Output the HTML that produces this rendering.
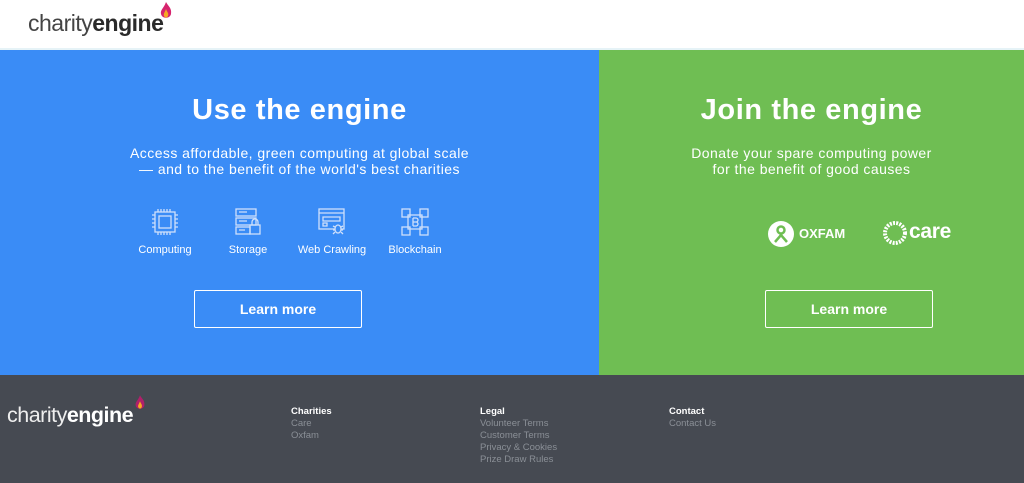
<!DOCTYPE html>
<html><head><meta charset="utf-8"><style>
*{margin:0;padding:0;box-sizing:border-box}
body{width:1024px;height:483px;overflow:hidden;font-family:"Liberation Sans",sans-serif;background:#fff;position:relative}
.logo{position:absolute;font-size:23px;letter-spacing:-0.5px;color:#444}
.logo b{font-weight:bold;color:#2a2a2a}
.blue{position:absolute;left:0;top:50px;width:599px;height:325px;background:#3a8cf6}
.green{position:absolute;left:599px;top:50px;width:425px;height:325px;background:#6fbe53}
h1{position:absolute;color:#fff;font-size:29px;font-weight:bold;text-align:center;width:100%;letter-spacing:0.6px}
.sub{position:absolute;color:#fff;font-size:14px;line-height:16px;text-align:center;width:100%;letter-spacing:0.45px}
.btn{position:absolute;border:1.5px solid #fff;color:#fff;font-weight:bold;font-size:14px;text-align:center;line-height:36px;width:168px;height:38px;border-radius:2px}
.ic{position:absolute;top:158px;color:#fff;font-size:11px;text-align:center;width:90px}
.ic svg{display:block;margin:0 auto 8px}
.foot{position:absolute;left:0;top:375px;width:1024px;height:108px;background:#464a52}
.col{position:absolute;top:31px;font-size:9.5px;line-height:12px;color:#8a8f96}
.col b{color:#fff;display:block}
</style></head><body>
<div class="logo" style="left:28px;top:10px">charity<b>engine</b></div>
<svg style="position:absolute;left:159px;top:1px" width="14" height="20" viewBox="0 0 14 20"><path d="M7 1C9 5 13 7 12 13C11 18 3 18 2 13C1 9 5 7 7 1Z" fill="#d6246e"/><path d="M7 8C8 11 10 12 9 15C8 17 6 17 5 15C4 13 6 11 7 8Z" fill="#f7a823"/></svg>
<div style="position:absolute;left:0;top:48px;width:1024px;height:2px;background:#e6f3f7"></div>
<div class="blue">
<h1 style="top:44px">Use the engine</h1>
<div class="sub" style="top:95px">Access affordable, green computing at global scale<br>— and to the benefit of the world's best charities</div>
<div class="ic" style="left:120px"><svg width="28" height="28" viewBox="0 0 28 28" fill="none" stroke="#cfe0fb" stroke-width="1.3"><rect x="4" y="4" width="20" height="20"/><rect x="8" y="8" width="12" height="12"/><path d="M7 1v3M10 1v3M13 1v3M16 1v3M19 1v3M7 24v3M10 24v3M13 24v3M16 24v3M19 24v3M1 7h3M1 11h3M1 15h3M1 19h3M24 7h3M24 11h3M24 15h3M24 19h3"/></svg>Computing</div>
<div class="ic" style="left:203px"><svg width="28" height="28" viewBox="0 0 28 28" fill="none" stroke="#cfe0fb" stroke-width="1.3"><rect x="2" y="1" width="20" height="7"/><rect x="2" y="10" width="20" height="7"/><rect x="2" y="19" width="14" height="7"/><rect x="16" y="17" width="10" height="9"/><path d="M18 17v-3a3 3 0 0 1 6 0v3M5 4h8M5 13h8M5 22h6"/></svg>Storage</div>
<div class="ic" style="left:287px"><svg width="30" height="28" viewBox="0 0 30 28" fill="none" stroke="#cfe0fb" stroke-width="1.3"><rect x="2" y="1" width="25" height="20"/><path d="M2 5h25M6 9h17v4H6zM6 15h4v3H6z"/><ellipse cx="21" cy="21" rx="3" ry="4" fill="#3a8cf6"/><path d="M16 18l2 1M26 18l-2 1M16 22h2M24 22h2M16 26l2-2M26 26l-2-2"/></svg>Web Crawling</div>
<div class="ic" style="left:370px"><svg width="28" height="28" viewBox="0 0 28 28" fill="none" stroke="#cfe0fb" stroke-width="1.3"><rect x="1" y="1" width="8" height="8"/><rect x="19" y="1" width="8" height="8"/><rect x="1" y="19" width="8" height="8"/><rect x="19" y="19" width="8" height="8"/><rect x="7" y="7" width="14" height="14"/><path d="M12 10v8M12 10h3a2 2 0 0 1 0 4h-3M12 14h3a2 2 0 0 1 0 4h-3"/></svg>Blockchain</div>
<div class="btn" style="left:194px;top:240px">Learn more</div>
</div>
<div class="green">
<h1 style="top:44px">Join the engine</h1>
<div class="sub" style="top:95px">Donate your spare computing power<br>for the benefit of good causes</div>
<svg style="position:absolute;left:168px;top:170px" width="28" height="28" viewBox="0 0 28 28"><circle cx="14" cy="14" r="13" fill="#fff"/><circle cx="14" cy="10" r="3.5" fill="none" stroke="#6fbe53" stroke-width="2.5"/><path d="M8 22l6-7 6 7" fill="none" stroke="#6fbe53" stroke-width="2.5"/></svg>
<div style="position:absolute;left:200px;top:176px;color:#fff;font-weight:bold;font-size:13px">OXFAM</div>
<svg style="position:absolute;left:284px;top:171px" width="24" height="24" viewBox="0 0 24 24"><circle cx="12" cy="12" r="10" fill="none" stroke="#fff" stroke-width="4" stroke-dasharray="2 1.2"/></svg>
<div style="position:absolute;left:310px;top:170px;color:#fff;font-weight:bold;font-size:21px;letter-spacing:-0.3px">care</div>
<div class="btn" style="left:166px;top:240px">Learn more</div>
</div>
<div class="foot">
<div class="logo" style="left:7px;top:28px;color:#eee;font-size:21.5px"><span>charity</span><b style="color:#fff">engine</b></div>
<svg style="position:absolute;left:134px;top:19px" width="12" height="18" viewBox="0 0 14 20"><path d="M7 1C9 5 13 7 12 13C11 18 3 18 2 13C1 9 5 7 7 1Z" fill="#b0206a"/><path d="M7 8C8 11 10 12 9 15C8 17 6 17 5 15C4 13 6 11 7 8Z" fill="#f7a823"/></svg>
<div class="col" style="left:291px"><b>Charities</b>Care<br>Oxfam</div>
<div class="col" style="left:480px"><b>Legal</b>Volunteer Terms<br>Customer Terms<br>Privacy &amp; Cookies<br>Prize Draw Rules</div>
<div class="col" style="left:669px"><b>Contact</b>Contact Us</div>
</div>
</body></html>
